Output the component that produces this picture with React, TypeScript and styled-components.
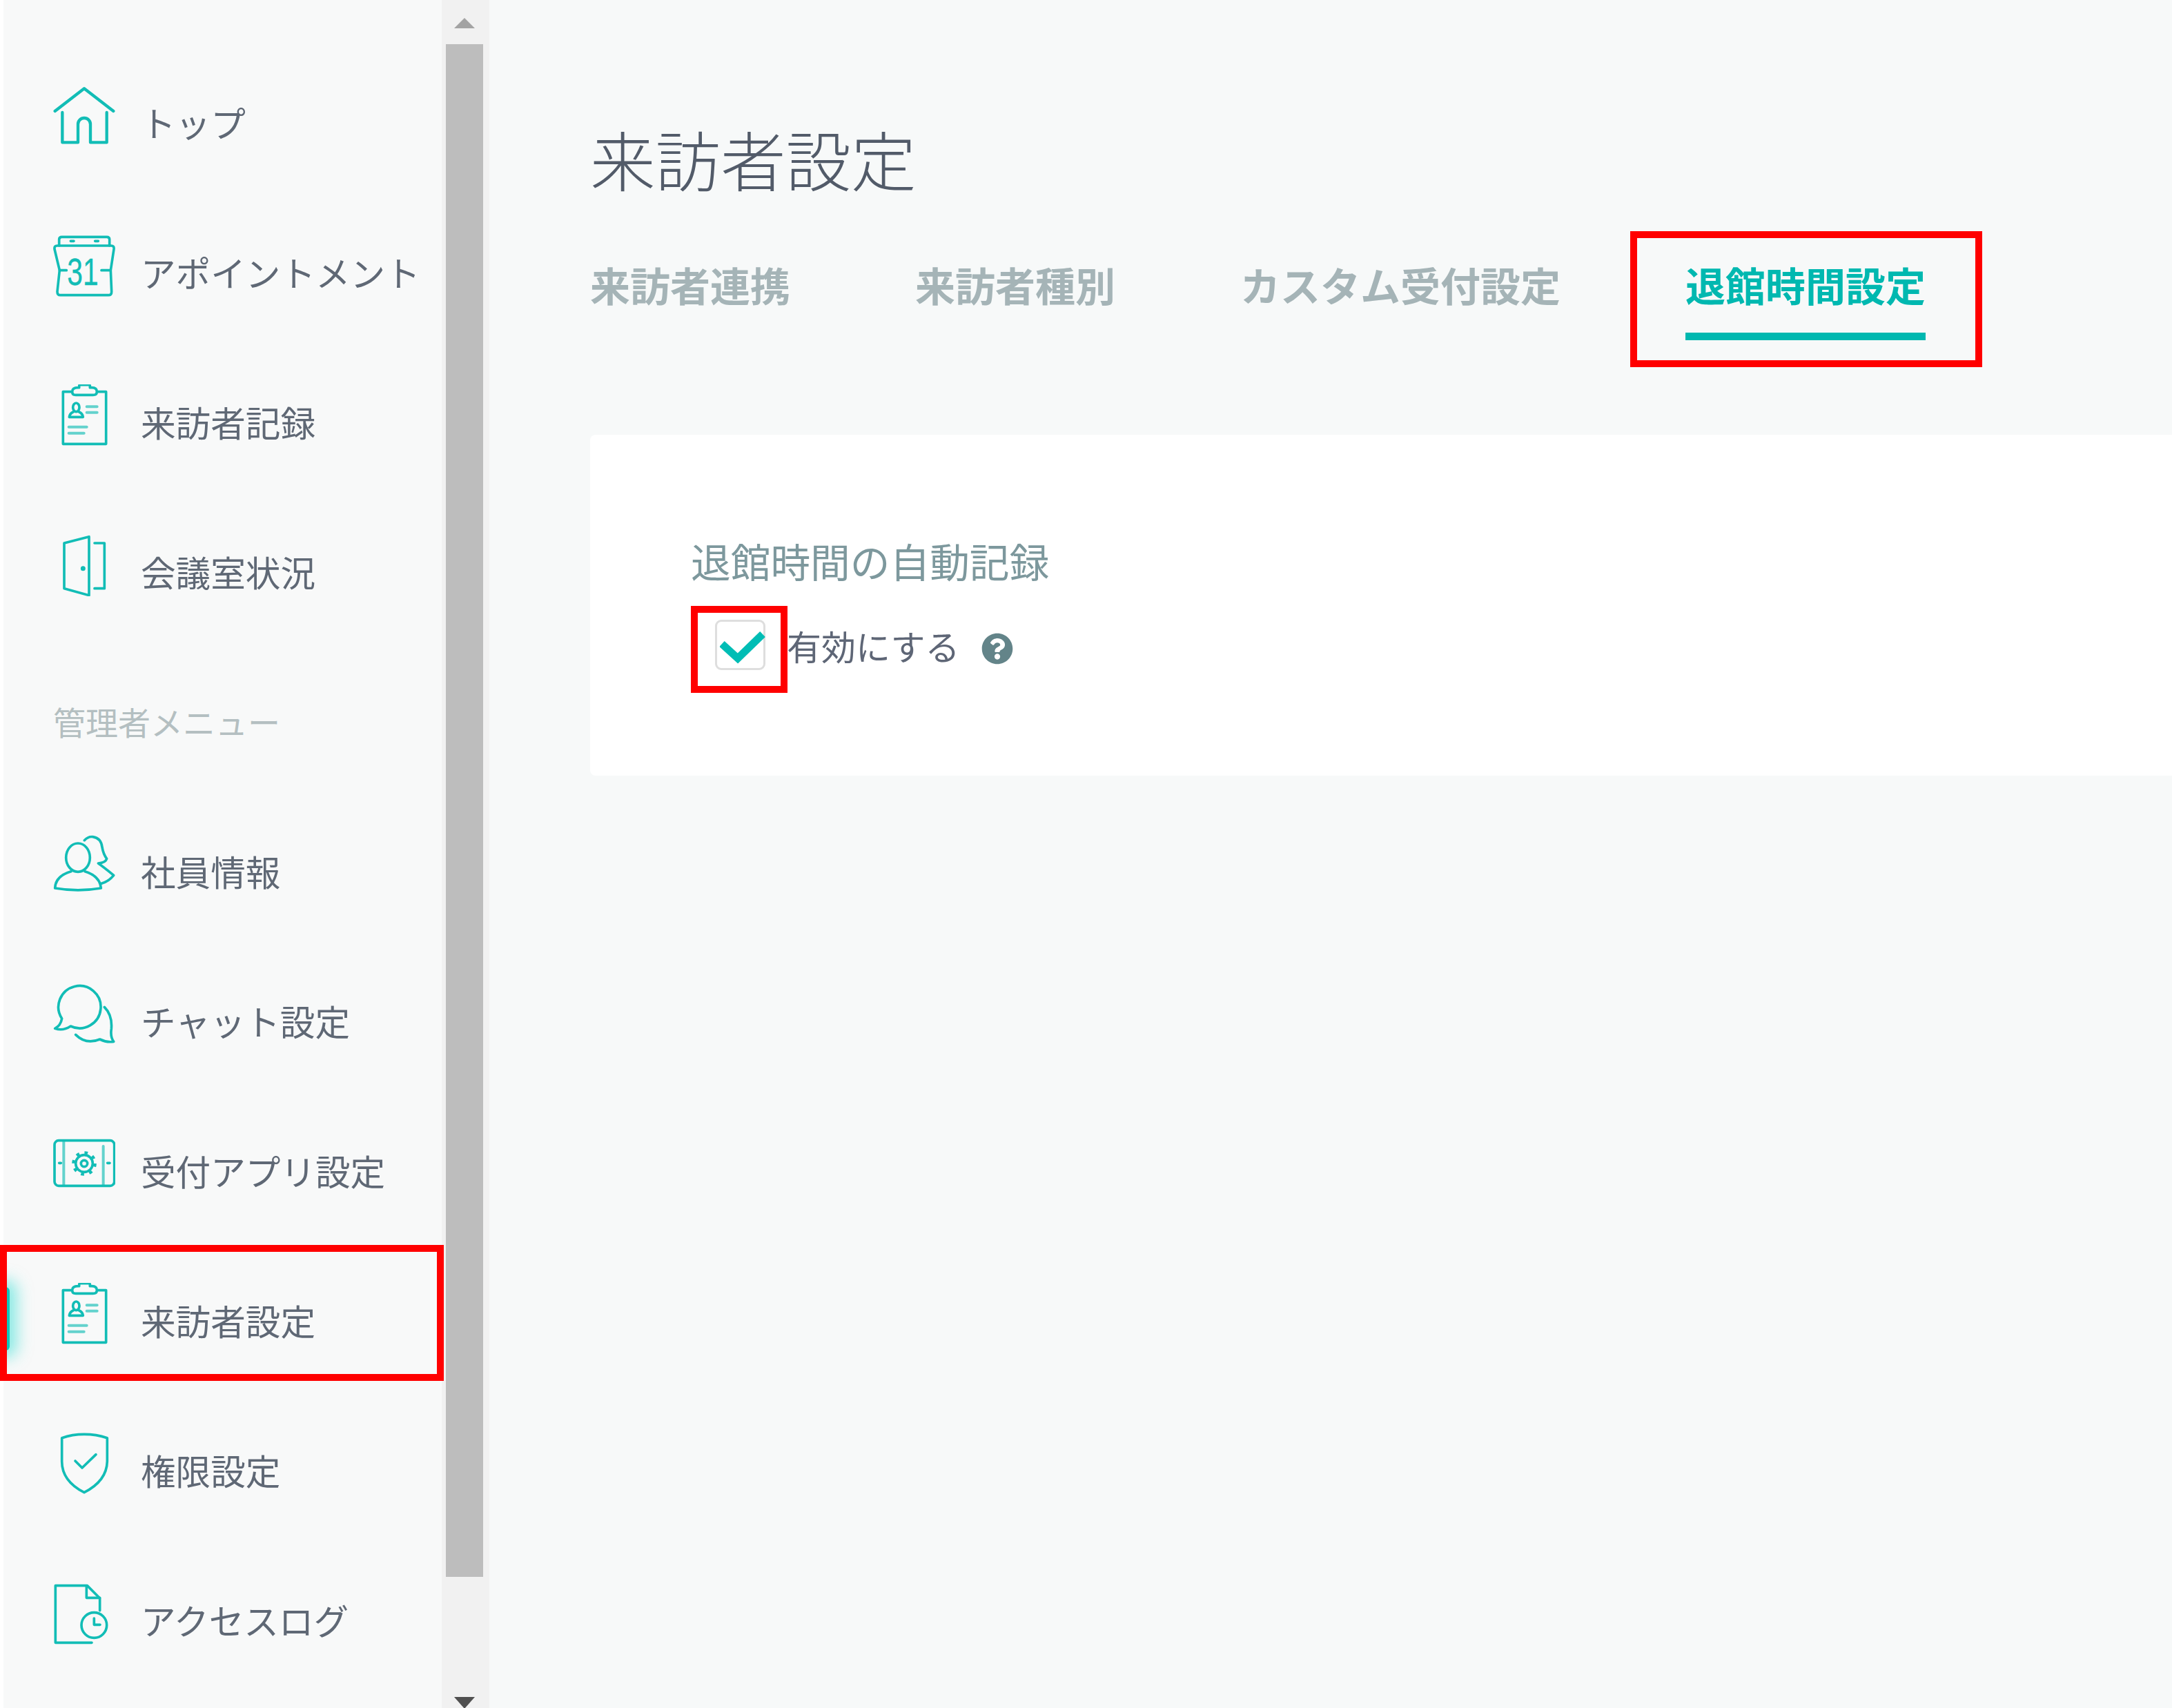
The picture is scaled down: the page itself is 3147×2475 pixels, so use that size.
import React from "react";
import styled, { createGlobalStyle } from "styled-components";
import { FaQuestionCircle } from "react-icons/fa";

const Global = createGlobalStyle`
  html, body { margin: 0; padding: 0; background: #fff; }
  body { font-family: "Noto Sans CJK JP", "Noto Sans", sans-serif; }
  #root { height: 2475px; overflow: hidden; }
`;

const TEAL = "#12bdb6";

const Page = styled.div`
  display: flex;
  height: 2475px;
  padding-left: 5px;
  box-sizing: border-box;
  overflow: hidden;
  background: #fff;
`;

const Sidebar = styled.nav`
  width: 635px;
  flex: none;
  padding: 71px 0 0 72px;
  box-sizing: border-box;
  background: #f8f9f9;
`;

const NavItem = styled.a`
  position: relative;
  display: flex;
  align-items: center;
  gap: 37px;
  height: 217px;
  padding-bottom: 6px;
  box-sizing: border-box;
  color: #5f6875;
  font-size: 50.6px;
  font-weight: 400;
  line-height: 60px;
  white-space: nowrap;
`;

const SectionLabel = styled.div`
  display: flex;
  align-items: center;
  height: 217px;
  padding-bottom: 6px;
  box-sizing: border-box;
  color: #b4bfc1;
  font-size: 47px;
  white-space: nowrap;
`;

const IconSvg = styled.svg`
  flex: none;
  width: 90px;
  height: 90px;
  margin-bottom: 18px;
  fill: none;
  stroke: ${TEAL};
  stroke-width: 11;
  stroke-linecap: round;
  stroke-linejoin: round;
`;

const ThickPath = styled.path`
  stroke-width: 13;
`;

const SoftPath = styled.path`
  opacity: 0.65;
  stroke-width: 12;
`;

const GearTeeth = styled.circle`
  stroke-width: 13;
  stroke-linecap: butt;
  stroke-dasharray: 14 22.9;
`;

const CalendarDigits = styled.text`
  fill: ${TEAL};
  stroke: ${TEAL};
  stroke-width: 1;
  font-family: "Liberation Sans", sans-serif;
  font-size: 165px;
`;

const ActiveBar = styled.span`
  position: absolute;
  left: -77px;
  top: 58px;
  width: 14px;
  height: 92px;
  border-radius: 0 6px 6px 0;
  background: #0fc4bc;
  box-shadow: 0 0 22px 10px rgba(40, 220, 210, 0.55);
`;

const Highlight = styled.span<{ $left: number; $top: number; $width: number; $height: number }>`
  position: absolute;
  left: ${(p) => p.$left}px;
  top: ${(p) => p.$top}px;
  width: ${(p) => p.$width}px;
  height: ${(p) => p.$height}px;
  box-sizing: border-box;
  border: 10px solid #ff0000;
  pointer-events: none;
`;

const ScrollTrack = styled.div`
  width: 69px;
  flex: none;
  padding: 26px 9px 0 6px;
  box-sizing: border-box;
  background: #f1f1f1;
  display: flex;
  flex-direction: column;
  align-items: center;
`;

const ArrowUp = styled.span`
  width: 0;
  height: 0;
  border-left: 15px solid transparent;
  border-right: 15px solid transparent;
  border-bottom: 15px solid #a3a3a3;
`;

const Thumb = styled.div`
  width: 54px;
  height: 2221px;
  margin-top: 23px;
  flex: none;
  background: #bdbdbd;
`;

const ArrowDown = styled.span`
  width: 0;
  height: 0;
  margin-top: 174px;
  border-left: 15px solid transparent;
  border-right: 15px solid transparent;
  border-top: 17px solid #505050;
`;

const Main = styled.main`
  flex: 1;
  min-width: 0;
  padding: 179px 0 0 146px;
  box-sizing: border-box;
  background: #f7f9f9;
`;

const Title = styled.h1`
  margin: 0;
  color: #525b69;
  font-size: 94.5px;
  font-weight: 300;
  line-height: 100px;
  white-space: nowrap;
`;

const Tabs = styled.div`
  display: flex;
  gap: 181px;
  margin-top: 103px;
`;

const Tab = styled.a<{ $active?: boolean }>`
  position: relative;
  padding-bottom: 40px;
  border-bottom: 11px solid ${(p) => (p.$active ? "#00b8b0" : "transparent")};
  color: ${(p) => (p.$active ? "#00b8b0" : "#a5b4b7")};
  font-size: 58px;
  font-weight: 700;
  line-height: 60px;
  white-space: nowrap;
`;

const Card = styled.section`
  height: 494px;
  margin-top: 137px;
  padding: 152px 0 0 146px;
  box-sizing: border-box;
  border-radius: 8px 0 0 8px;
  background: #fff;
`;

const FieldLabel = styled.div`
  color: #7d989d;
  font-size: 57.7px;
  line-height: 60px;
  white-space: nowrap;
`;

const CheckRow = styled.label`
  display: flex;
  align-items: center;
  margin: 56px 0 0 35px;
`;

const CheckBox = styled.span`
  position: relative;
  flex: none;
  width: 73px;
  height: 73px;
  box-sizing: border-box;
  border: 3px solid #dedede;
  border-radius: 9px;
  background: #fff;
`;

const CheckMark = styled.svg`
  position: absolute;
  left: 4px;
  top: 14px;
  width: 66px;
  height: 50px;
  fill: none;
  stroke: #00bdb5;
  stroke-width: 11;
`;

const CheckText = styled.span`
  margin-left: 31px;
  color: #5e6676;
  font-size: 50px;
  line-height: 60px;
  white-space: nowrap;
`;

const HelpIcon = styled(FaQuestionCircle)`
  flex: none;
  width: 46px;
  height: 46px;
  margin: 10px 0 0 31px;
  color: #638489;
`;

const ClipboardIcon = () => (
  <IconSvg viewBox="52 78 270 270">
    <path d="M130 110H95V337H282V110H245" />
    <path d="M135 110Q135 92 160 92H165V85Q165 80 172 80H205Q212 80 212 85V92H220Q242 92 242 110Q242 124 225 124H150Q135 124 135 110Z" />
    <ellipse cx="152" cy="178" rx="14" ry="19" />
    <path d="M122 220H182Q180 205 165 198M122 220Q124 205 139 198" />
    <SoftPath d="M198 175H243M198 200H243M120 263H198M120 290H186" />
  </IconSvg>
);

const HomeIcon = () => (
  <IconSvg viewBox="52 66 270 270">
    <ThickPath d="M60 180L187 82L314 180" />
    <ThickPath d="M92 186V316H160V237A27 27 0 0 1 214 237V316H285V186" />
  </IconSvg>
);

const CalendarIcon = () => (
  <IconSvg viewBox="52 717 270 270">
    <path d="M78 765V738Q78 727 90 727H285Q297 727 297 738V765" />
    <path d="M70 765H304Q318 765 316 780L302 872L306 965Q306 980 292 980H84Q70 980 70 965L80 872L58 780Q56 765 70 765Z" />
    <path d="M80 872H110M262 872H298M128 745H142M234 745H248" />
    <CalendarDigits x="113" y="935" textLength="136" lengthAdjust="spacingAndGlyphs">31</CalendarDigits>
  </IconSvg>
);

const DoorIcon = () => (
  <IconSvg viewBox="52 729 270 270">
    <path d="M208 740L100 768V965L208 995Z" />
    <path d="M232 768H275V965H232" />
    <circle cx="182" cy="878" r="5" />
  </IconSvg>
);

const PeopleIcon = () => (
  <IconSvg viewBox="52 81 270 270">
    <ellipse cx="160" cy="185" rx="52" ry="62" />
    <path d="M130 245Q62 265 60 318Q160 335 260 318Q255 265 190 245" />
    <path d="M188 110Q205 92 225 95Q260 100 265 140Q270 170 285 190Q280 208 248 210Q270 225 315 262Q295 288 262 298" />
  </IconSvg>
);

const ChatIcon = () => (
  <IconSvg viewBox="52 732 270 270">
    <path d="M90 885A92 92 0 1 1 128 918Q95 940 60 928Q85 915 90 885Z" />
    <path d="M275 835Q310 870 305 930Q300 965 315 985Q285 990 255 975Q195 1000 150 955" />
  </IconSvg>
);

const TabletIcon = () => (
  <IconSvg viewBox="52 33 270 270">
    <rect x="58" y="65" width="260" height="197" rx="18" />
    <SoftPath d="M98 68V258M270 90V258" />
    <path d="M78 163H86M288 163H298" />
    <circle cx="187" cy="165" r="37" />
    <circle cx="187" cy="165" r="14" />
    <GearTeeth cx="187" cy="165" r="47" />
  </IconSvg>
);

const ShieldIcon = () => (
  <IconSvg viewBox="52 75 270 270">
    <path d="M187 82Q240 82 287 98V200Q285 285 187 335Q90 285 90 200V98Q135 82 187 82Z" />
    <path d="M148 198L178 228L238 170" />
  </IconSvg>
);

const FileIcon = () => (
  <IconSvg viewBox="52 726 270 270">
    <path d="M220 988H62V740H200L255 795V848" />
    <path d="M197 742V793H255" />
    <circle cx="230" cy="912" r="55" />
    <path d="M230 882V910H256" />
  </IconSvg>
);

const App = () => (
  <>
    <Global />
    <Page>
      <Sidebar>
        <NavItem><HomeIcon />トップ</NavItem>
        <NavItem><CalendarIcon />アポイントメント</NavItem>
        <NavItem><ClipboardIcon />来訪者記録</NavItem>
        <NavItem><DoorIcon />会議室状況</NavItem>
        <SectionLabel>管理者メニュー</SectionLabel>
        <NavItem><PeopleIcon />社員情報</NavItem>
        <NavItem><ChatIcon />チャット設定</NavItem>
        <NavItem><TabletIcon />受付アプリ設定</NavItem>
        <NavItem>
          <ActiveBar />
          <ClipboardIcon />来訪者設定
          <Highlight $left={-77} $top={-3} $width={643} $height={197} />
        </NavItem>
        <NavItem><ShieldIcon />権限設定</NavItem>
        <NavItem><FileIcon />アクセスログ</NavItem>
      </Sidebar>
      <ScrollTrack>
        <ArrowUp />
        <Thumb />
        <ArrowDown />
      </ScrollTrack>
      <Main>
        <Title>来訪者設定</Title>
        <Tabs>
          <Tab>来訪者連携</Tab>
          <Tab>来訪者種別</Tab>
          <Tab>カスタム受付設定</Tab>
          <Tab $active>
            退館時間設定
            <Highlight $left={-80} $top={-47} $width={510} $height={197} />
          </Tab>
        </Tabs>
        <Card>
          <FieldLabel>退館時間の自動記録</FieldLabel>
          <CheckRow>
            <CheckBox>
              <CheckMark viewBox="0 0 66 50">
                <path d="M3 18L26 39L62 4" />
              </CheckMark>
              <Highlight $left={-38} $top={-23} $width={140} $height={126} />
            </CheckBox>
            <CheckText>有効にする</CheckText>
            <HelpIcon />
          </CheckRow>
        </Card>
      </Main>
    </Page>
  </>
);

export default App;
